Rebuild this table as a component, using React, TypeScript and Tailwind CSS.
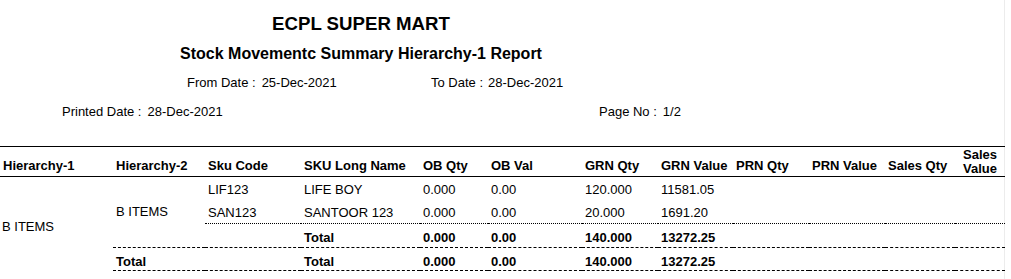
import React from "react";

type Row = {
  sku: string;
  name: string;
  obQty: string;
  obVal: string;
  grnQty: string;
  grnVal: string;
};

const items: Row[] = [
  { sku: "LIF123", name: "LIFE BOY", obQty: "0.000", obVal: "0.00", grnQty: "120.000", grnVal: "11581.05" },
  { sku: "SAN123", name: "SANTOOR 123", obQty: "0.000", obVal: "0.00", grnQty: "20.000", grnVal: "1691.20" },
];

const headers = [
  "Hierarchy-1",
  "Hierarchy-2",
  "Sku Code",
  "SKU Long Name",
  "OB Qty",
  "OB Val",
  "GRN Qty",
  "GRN Value",
  "PRN Qty",
  "PRN Value",
  "Sales Qty",
];

const widths = [113, 92, 96, 119, 68, 94, 76, 75, 76, 76, 70, 50];

function Label({ label, value, gap = "ml-[6px]" }: { label: string; value: string; gap?: string }) {
  return (
    <span className="whitespace-nowrap">
      {label}
      <span className={gap}>{value}</span>
    </span>
  );
}

export default function App() {
  const td = "px-[3px] align-middle text-left";
  const dashed = "border-b border-dashed border-black";
  const empties = (cls: string) =>
    [0, 1, 2, 3].map((i) => <td key={i} className={`${td} ${cls}`} />);

  // row heights / top padding, matched to the printed report
  const itemRow = ["h-[24px] pt-[2px]", "h-[23px] pt-[2px]"];
  const groupTotal = "h-[24px] pt-[4px]";
  const grandTotal = "h-[23px] pt-[6px]";

  return (
    <div className="flex min-h-[279px] bg-white">
      <div
        className="w-[1005px] border-r border-[#ececec] text-black"
        style={{ fontFamily: '"Liberation Sans", Arial, sans-serif' }}
      >
        <div className="w-[722px] pt-[13px] text-center">
          <h1 className="text-[18.67px] font-bold leading-[22px]">ECPL SUPER MART</h1>
          <h2 className="mt-[9px] text-[16px] font-bold leading-[20px]">
            Stock Movementc Summary Hierarchy-1 Report
          </h2>
        </div>

        <div className="mt-[11px] flex pl-[187px] text-[13px] leading-[16px]">
          <div className="w-[244px]">
            <Label label="From Date :" value="25-Dec-2021" />
          </div>
          <Label label="To Date :" value="28-Dec-2021" gap="ml-[5px]" />
        </div>

        <div className="mt-[13px] flex pl-[62px] text-[13px] leading-[16px]">
          <div className="w-[537px]">
            <Label label="Printed Date :" value="28-Dec-2021" />
          </div>
          <Label label="Page No :" value="1/2" />
        </div>

        <table className="mt-[26px] w-[1005px] table-fixed border-collapse text-[13px] leading-[14px]">
          <colgroup>
            {widths.map((w, i) => (
              <col key={i} style={{ width: w }} />
            ))}
          </colgroup>
          <thead>
            <tr className="border-y border-black">
              {headers.map((h) => (
                <th key={h} className="h-[29px] whitespace-nowrap px-[3px] pt-[8px] text-left align-middle font-bold">
                  {h}
                </th>
              ))}
              <th className="h-[29px] px-0 pt-[1px] text-center align-middle font-bold leading-[14px]">
                Sales
                <br />
                Value
              </th>
            </tr>
          </thead>
          <tbody>
            {items.map((r, i) => {
              const b = i === 1 ? "border-b border-dotted border-black" : "";
              const h = itemRow[i];
              return (
                <tr key={r.sku}>
                  {i === 0 && (
                    <>
                      <td rowSpan={4} className="px-[2px] pt-[6px] align-middle">
                        B ITEMS
                      </td>
                      <td rowSpan={3} className={`${dashed} px-[3px] align-middle`}>
                        B ITEMS
                      </td>
                    </>
                  )}
                  <td className={`${td} ${h} ${b}`}>{r.sku}</td>
                  <td className={`${td} ${h} ${b}`}>{r.name}</td>
                  <td className={`${td} ${h} ${b}`}>{r.obQty}</td>
                  <td className={`${td} ${h} ${b}`}>{r.obVal}</td>
                  <td className={`${td} ${h} ${b}`}>{r.grnQty}</td>
                  <td className={`${td} ${h} ${b}`}>{r.grnVal}</td>
                  {empties(`${h} ${b}`)}
                </tr>
              );
            })}
            <tr className="font-bold">
              <td className={`${td} ${groupTotal} ${dashed}`} />
              <td className={`${td} ${groupTotal} ${dashed}`}>Total</td>
              <td className={`${td} ${groupTotal} ${dashed}`}>0.000</td>
              <td className={`${td} ${groupTotal} ${dashed}`}>0.00</td>
              <td className={`${td} ${groupTotal} ${dashed}`}>140.000</td>
              <td className={`${td} ${groupTotal} ${dashed}`}>13272.25</td>
              {empties(`${groupTotal} ${dashed}`)}
            </tr>
            <tr className="font-bold">
              <td className={`${td} ${grandTotal} ${dashed}`}>Total</td>
              <td className={`${td} ${grandTotal} ${dashed}`} />
              <td className={`${td} ${grandTotal} ${dashed}`}>Total</td>
              <td className={`${td} ${grandTotal} ${dashed}`}>0.000</td>
              <td className={`${td} ${grandTotal} ${dashed}`}>0.00</td>
              <td className={`${td} ${grandTotal} ${dashed}`}>140.000</td>
              <td className={`${td} ${grandTotal} ${dashed}`}>13272.25</td>
              {empties(`${grandTotal} ${dashed}`)}
            </tr>
          </tbody>
        </table>
      </div>
    </div>
  );
}
